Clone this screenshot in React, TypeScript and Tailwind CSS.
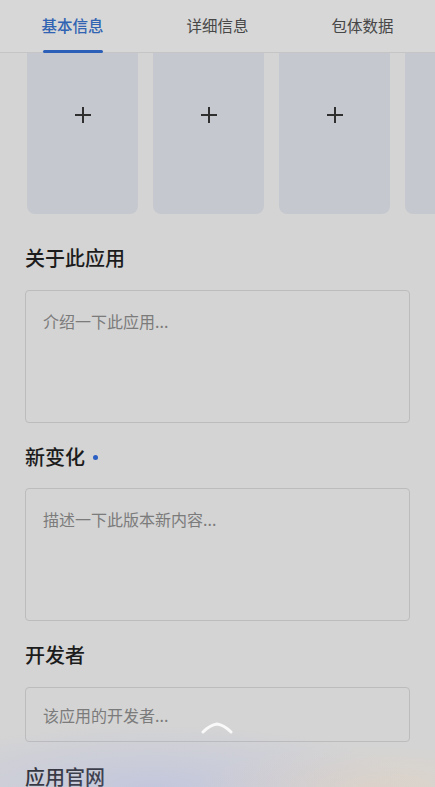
import React from "react";

const tabs = ["基本信息", "详细信息", "包体数据"];

function Label({ text, dot }: { text: string; dot?: boolean }) {
  return (
    <div className="flex h-[28px] items-center gap-[8px] text-[20px] font-medium leading-[28px] text-[#1c1c1c]">
      <span>{text}</span>
      {dot && <span className="mt-[1px] h-[5px] w-[5px] rounded-full bg-[#2b5fc4]" />}
    </div>
  );
}

function Box({ placeholder, tall }: { placeholder: string; tall?: boolean }) {
  return (
    <div
      className={
        tall
          ? "h-[133px] rounded-[4px] border border-[#bcbcbc] px-[17px] pt-[18px] text-[16px] leading-[24px] text-[#7b7b7b]"
          : "flex h-[55px] items-center rounded-[4px] border border-[#bcbcbc] px-[17px] text-[16px] leading-[24px] text-[#7b7b7b]"
      }
    >
      {placeholder}
    </div>
  );
}

export default function App() {
  return (
    <div
      className="relative h-[787px] w-[435px] overflow-hidden bg-[#d4d4d4]"
      style={{ fontFamily: '"Noto Sans CJK SC", "Noto Sans", sans-serif' }}
    >
      {/* tabs */}
      <div className="grid h-[53px] grid-cols-3 border-b border-[#c5c5c5] bg-[#d7d7d7]">
        {tabs.map((t, i) => (
          <div key={t} className="relative flex items-center justify-center pb-[1px]">
            <span
              className={
                i === 0
                  ? "text-[15.5px] font-medium text-[#3063b2]"
                  : "text-[15.5px] text-[#474747]"
              }
            >
              {t}
            </span>
            {i === 0 && (
              <span className="absolute bottom-[-1px] left-1/2 h-[3px] w-[60px] -translate-x-1/2 rounded-full bg-[#2c5fb8]" />
            )}
          </div>
        ))}
      </div>

      {/* screenshot tiles */}
      <div className="flex gap-[15px] overflow-hidden pl-[27px]">
        {[0, 1, 2, 3].map((n) => (
          <div
            key={n}
            className="flex h-[161px] w-[111px] shrink-0 items-center justify-center rounded-b-[8px] bg-[#c5c8ce] pb-[37px]"
          >
            {n < 3 && (
              <svg width="18" height="18" viewBox="0 0 18 18">
                <path d="M9 1v16M1 9h16" stroke="#2f2f2f" strokeWidth="2" />
              </svg>
            )}
          </div>
        ))}
      </div>

      {/* form */}
      <div className="px-[25px] pt-[30px]">
        <Label text="关于此应用" />
        <div className="mt-[18px]">
          <Box placeholder="介绍一下此应用..." tall />
        </div>

        <div className="mt-[20px]">
          <Label text="新变化" dot />
        </div>
        <div className="mt-[17px]">
          <Box placeholder="描述一下此版本新内容..." tall />
        </div>

        <div className="mt-[20px]">
          <Label text="开发者" />
        </div>
        <div className="mt-[18px]">
          <Box placeholder="该应用的开发者..." />
        </div>

        <div className="mt-[21px]">
          <Label text="应用官网" />
        </div>
      </div>

      {/* bottom glow */}
      <div className="pointer-events-none absolute inset-x-0 bottom-0 h-[90px] bg-[radial-gradient(ellipse_60%_70%_at_35%_100%,rgba(165,175,235,0.35),transparent)]" />
      <div className="pointer-events-none absolute inset-x-0 bottom-0 h-[70px] bg-[radial-gradient(ellipse_40%_60%_at_85%_100%,rgba(240,210,175,0.3),transparent)]" />

      {/* pull-up handle */}
      <svg
        className="pointer-events-none absolute left-[201px] top-[721px]"
        width="32"
        height="14"
        viewBox="0 0 32 14"
      >
        <path
          d="M2 11 Q9 4 16 3 Q23 4 30 11"
          fill="none"
          stroke="rgba(255,255,255,0.85)"
          strokeWidth="3"
          strokeLinecap="round"
        />
      </svg>
    </div>
  );
}
